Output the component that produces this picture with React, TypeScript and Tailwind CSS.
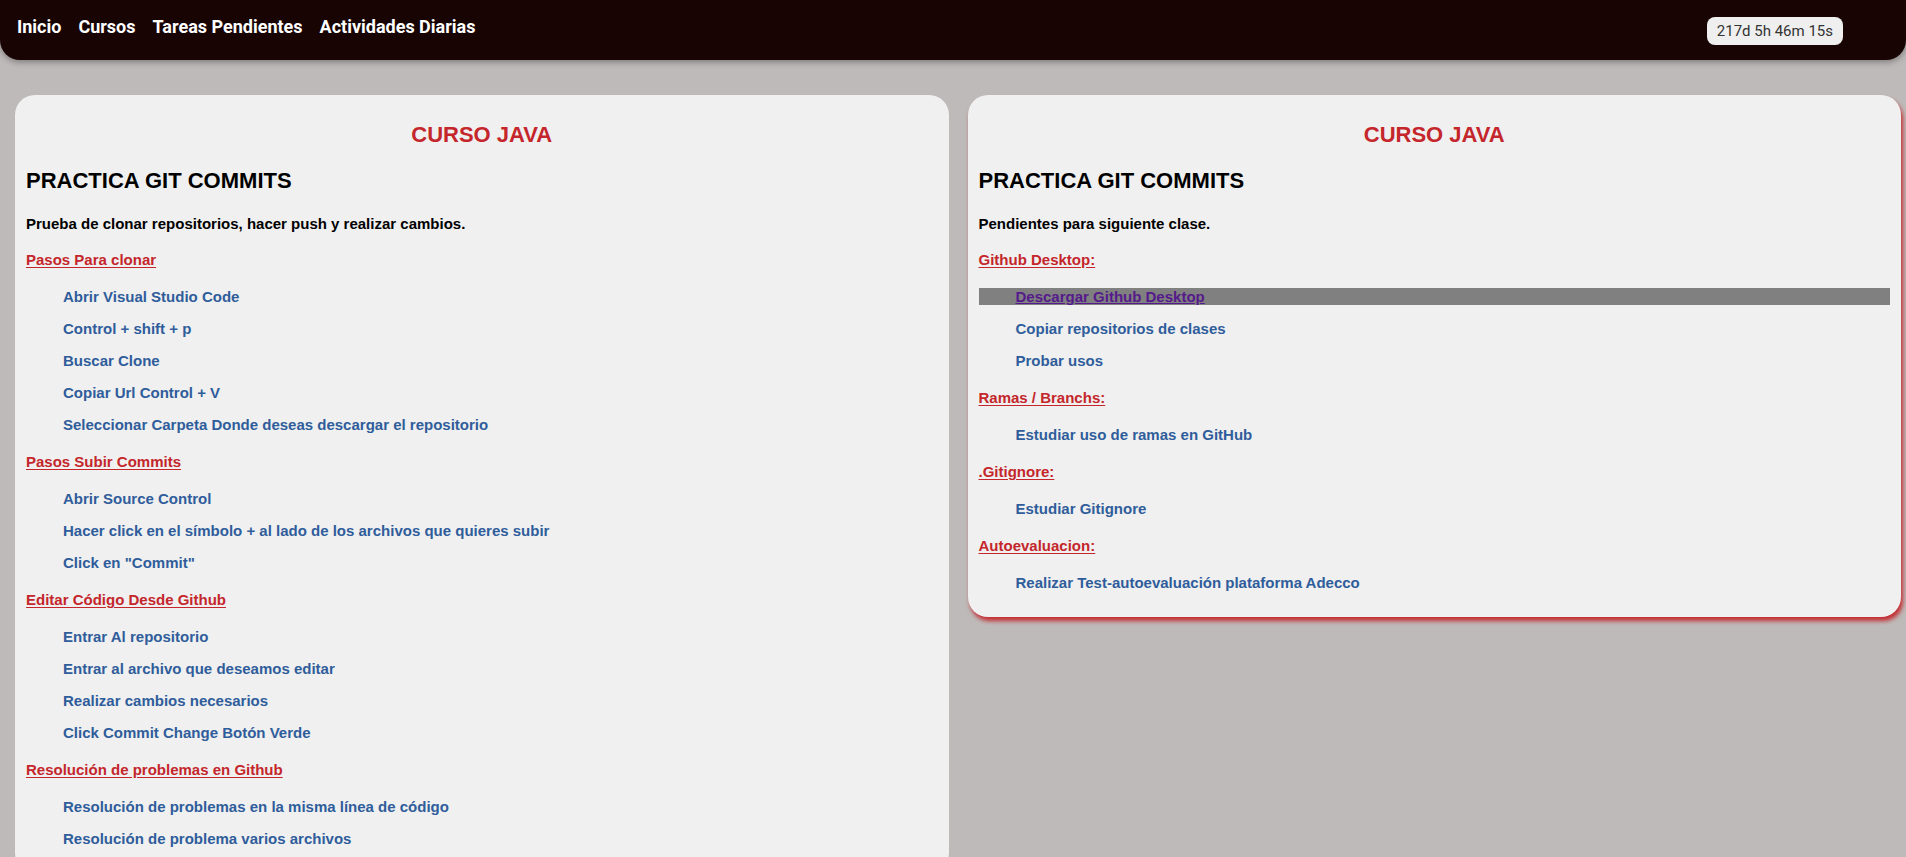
import React from 'react';

type Section = { title: string; items: string[]; hoverIndex?: number };

const leftSections: Section[] = [
  {
    title: 'Pasos Para clonar',
    items: [
      'Abrir Visual Studio Code',
      'Control + shift + p',
      'Buscar Clone',
      'Copiar Url Control + V',
      'Seleccionar Carpeta Donde deseas descargar el repositorio',
    ],
  },
  {
    title: 'Pasos Subir Commits',
    items: [
      'Abrir Source Control',
      'Hacer click en el símbolo + al lado de los archivos que quieres subir',
      'Click en "Commit"',
    ],
  },
  {
    title: 'Editar Código Desde Github',
    items: [
      'Entrar Al repositorio',
      'Entrar al archivo que deseamos editar',
      'Realizar cambios necesarios',
      'Click Commit Change Botón Verde',
    ],
  },
  {
    title: 'Resolución de problemas en Github',
    items: [
      'Resolución de problemas en la misma línea de código',
      'Resolución de problema varios archivos',
    ],
  },
];

const rightSections: Section[] = [
  {
    title: 'Github Desktop:',
    items: ['Descargar Github Desktop', 'Copiar repositorios de clases', 'Probar usos'],
    hoverIndex: 0,
  },
  { title: 'Ramas / Branchs:', items: ['Estudiar uso de ramas en GitHub'] },
  { title: '.Gitignore:', items: ['Estudiar Gitignore'] },
  { title: 'Autoevaluacion:', items: ['Realizar Test-autoevaluación plataforma Adecco'] },
];

const CourseCard: React.FC<{ intro: string; sections: Section[]; active?: boolean }> = ({ intro, sections, active }) => (
  <section
    className={`bg-[#f0f0f0] rounded-[20px] px-[11px] pt-[27px] pb-[26px] flex flex-col ${
      active ? 'shadow-[2px_4px_4px_rgba(196,38,43,0.95)]' : ''
    }`}
  >
    <h2 className="text-center text-[22px] leading-[26px] font-bold text-[#c4262b]">CURSO JAVA</h2>
    <h3 className="mt-[20px] text-[22px] leading-[26px] font-bold text-black">PRACTICA GIT COMMITS</h3>
    <p className="mt-[21px] text-[15px] leading-[17px] font-bold text-black">{intro}</p>

    {sections.map((s, i) => (
      <div key={s.title} className={i === 0 ? 'mt-[19px]' : 'mt-[20px]'}>
        <a className="block w-fit text-[15px] leading-[17px] font-bold text-[#c4262b] underline underline-offset-2">
          {s.title}
        </a>
        <ul className="mt-[20px] flex flex-col gap-[15px]">
          {s.items.map((it, j) => (
            <li
              key={it}
              className={`pl-[37px] text-[15px] leading-[17px] font-bold ${
                s.hoverIndex === j ? 'bg-[#808080] text-[#551a8b] underline' : 'text-[#2f5d9b]'
              }`}
            >
              {it}
            </li>
          ))}
        </ul>
      </div>
    ))}
  </section>
);

export default function App() {
  return (
    <div className="min-h-screen bg-[#bebab9] font-['Liberation_Sans',Arial,sans-serif]">
      <header className="h-[60px] bg-[#190404] rounded-b-[20px] shadow-[0_2px_6px_rgba(0,0,0,0.35)] flex items-start justify-between pl-[17px] pr-[63px] font-['Roboto',sans-serif]">
        <nav className="flex gap-[17px] pt-[15px] text-[18px] leading-[24px] font-bold text-white">
          <a>Inicio</a>
          <a>Cursos</a>
          <a>Tareas Pendientes</a>
          <a>Actividades Diarias</a>
        </nav>
        <div className="mt-[17px] h-[28px] px-[10px] rounded-[8px] bg-[#efefef] text-[#333] text-[15px] flex items-center">
          217d 5h 46m 15s
        </div>
      </header>

      <main className="grid grid-cols-2 items-start gap-[19px] pl-[15px] pr-[5px] pt-[35px] pb-[20px]">
        <CourseCard intro="Prueba de clonar repositorios, hacer push y realizar cambios." sections={leftSections} />
        <CourseCard intro="Pendientes para siguiente clase." sections={rightSections} active />
      </main>
    </div>
  );
}
